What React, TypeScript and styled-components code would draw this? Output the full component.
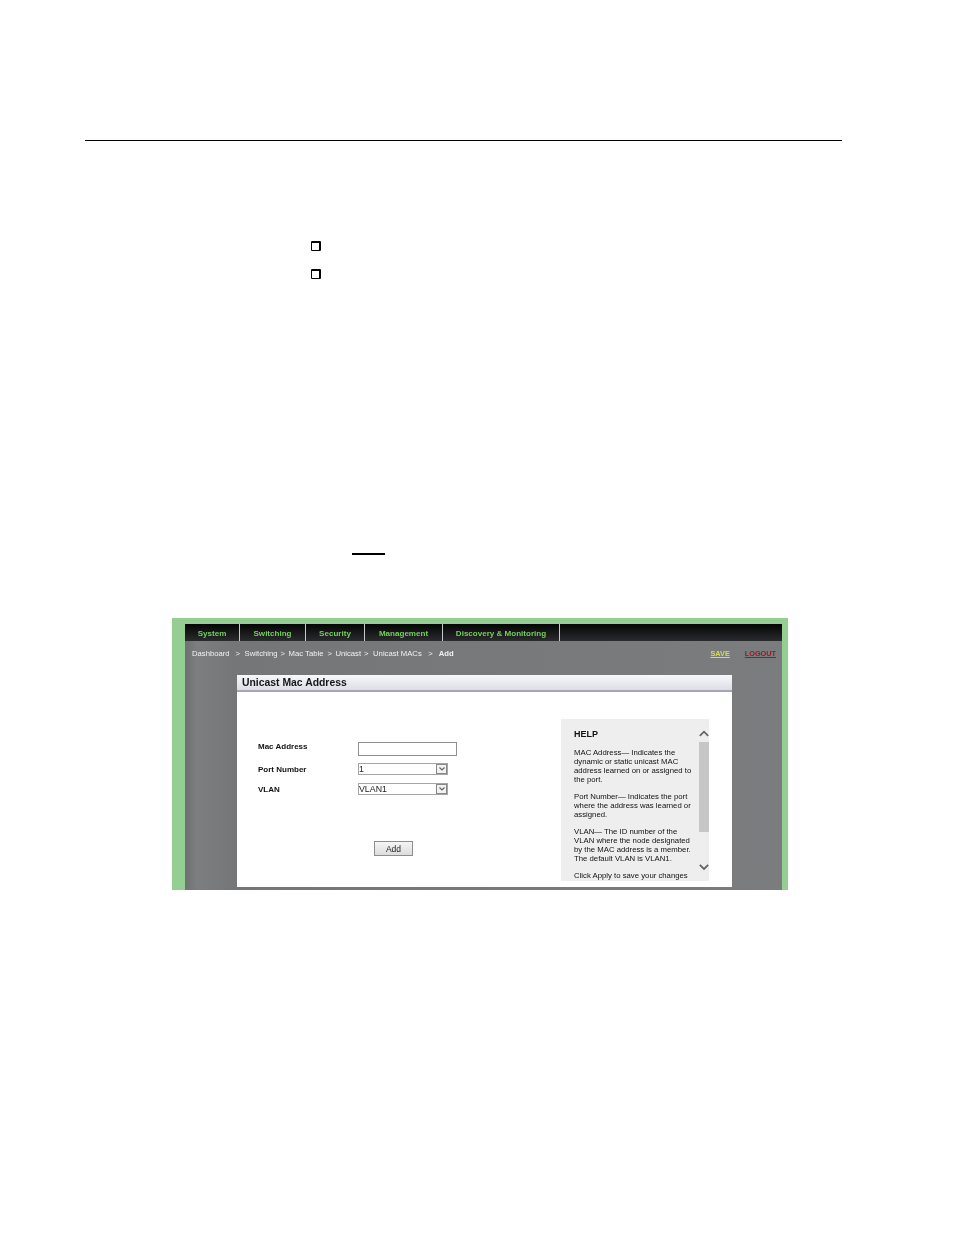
import React from "react";
import styled, { createGlobalStyle } from "styled-components";

const Global = createGlobalStyle`
  html, body { margin: 0; padding: 0; background: #fff; }
  body { font-family: "Liberation Sans", Arial, sans-serif; color: #000; }
`;

const Page = styled.div`
  width: 954px;
  height: 1235px;
  overflow: hidden;
  padding-top: 140px;
  box-sizing: border-box;
`;
const Rule = styled.div`
  margin-left: 85px;
  width: 757px;
  height: 1px;
  background: #000;
`;
const BoxList = styled.div`
  margin: 100px 0 0 311px;
  display: flex;
  flex-direction: column;
  gap: 18px;
`;
const Box = styled.span`
  display: block;
  width: 10px;
  height: 10px;
  box-sizing: border-box;
  border: 1px solid #000;
  border-top-width: 2px;
  border-right-width: 2.5px;
  border-radius: 1px;
`;
const Blank = styled.div`
  margin: 274px 0 0 352px;
  width: 33px;
  height: 2px;
  background: #000;
`;
const Shot = styled.div`
  margin: 63px 0 0 172px;
  width: 616px;
  height: 272px;
  box-sizing: border-box;
  padding: 6px 6px 0 13px;
  background: #94ce93;
  overflow: hidden;
  filter: blur(0.4px);
`;
const Console = styled.div`
  height: 272px;
  background: linear-gradient(90deg, #6f7071 0, #7d7e7f 2%, #757677 8%, #7b7c7d 100%);
`;
const Nav = styled.nav`
  display: flex;
  height: 17px;
  background: linear-gradient(180deg, #050505, #2a2b2d);
`;
const NavItem = styled.div<{ $w: number }>`
  width: ${(p) => p.$w}px;
  box-sizing: border-box;
  border-right: 1px solid #c8c8c8;
  font-size: 8.05px;
  line-height: 20px;
  font-weight: bold;
  color: #72d05c;
  text-align: center;
  white-space: nowrap;
`;
const Crumbs = styled.div`
  display: flex;
  align-items: center;
  height: 24px;
  padding: 0 6px 0 7px;
  font-size: 7.7px;
  color: #f2f2f2;
`;
const Crumb = styled.span<{ $gap: number; $bold?: boolean }>`
  margin-right: ${(p) => p.$gap}px;
  font-weight: ${(p) => (p.$bold ? "bold" : "normal")};
  white-space: nowrap;
`;
const Spacer = styled.span`
  flex: 1;
`;
const Action = styled.a<{ $color: string }>`
  color: ${(p) => p.$color};
  font-size: 7.3px;
  font-weight: bold;
  text-decoration: underline;
  margin-left: 15px;
`;
const Panel = styled.section`
  margin: 10px 0 0 52px;
  width: 495px;
  height: 212px;
  background: #fff;
`;
const PanelHead = styled.h2`
  margin: 0;
  height: 17px;
  box-sizing: border-box;
  padding-left: 5px;
  font-size: 10.4px;
  line-height: 15px;
  font-weight: bold;
  color: #15151c;
  background: linear-gradient(180deg, #f7f8fc, #dcdee6);
  border-bottom: 2px solid #a6a6b2;
`;
const PanelBody = styled.div`
  display: flex;
  justify-content: space-between;
  padding: 27px 23px 0 21px;
`;
const Form = styled.div`
  display: flex;
  flex-direction: column;
  padding-top: 23px;
`;
const Row = styled.div<{ $h: number }>`
  display: flex;
  align-items: center;
  height: ${(p) => p.$h}px;
`;
const Label = styled.label<{ $lift?: number }>`
  width: 100px;
  margin-bottom: ${(p) => p.$lift ?? 0}px;
  font-size: 8px;
  font-weight: bold;
  color: #111;
`;
const Input = styled.div`
  width: 99px;
  height: 14px;
  box-sizing: border-box;
  border: 1px solid #8f8f8f;
  background: #fff;
`;
const Select = styled.div`
  width: 90px;
  height: 12px;
  box-sizing: border-box;
  border: 1px solid #a5a5a5;
  display: flex;
  align-items: center;
  justify-content: space-between;
  font-size: 8.8px;
  color: #222;
`;
const Arrow = styled.span`
  width: 11px;
  height: 10px;
  box-sizing: border-box;
  border: 1px solid #888;
  background: #f2f2f2;
  display: flex;
  align-items: center;
  justify-content: center;
`;
const AddButton = styled.button`
  align-self: flex-start;
  margin: 45px 0 0 116px;
  width: 39px;
  height: 15px;
  padding: 0;
  box-sizing: border-box;
  border: 1px solid #8d8d8d;
  background: linear-gradient(180deg, #f5f5f5, #dcdcdc);
  font-family: inherit;
  font-size: 8.5px;
  color: #222;
`;
const Help = styled.aside`
  position: relative;
  width: 148px;
  height: 162px;
  box-sizing: border-box;
  padding: 10px 16px 0 13px;
  overflow: hidden;
  background: #eeeeee;
  font-size: 7.75px;
  line-height: 9px;
  color: #111;
`;
const HelpTitle = styled.h3`
  margin: 0 0 8px;
  font-size: 9px;
  line-height: 11px;
  font-weight: bold;
  color: #111;
`;
const HelpText = styled.p`
  margin: 0 0 8px;
`;
const ScrollTrack = styled.div`
  position: absolute;
  top: 11px;
  right: 0;
  width: 10px;
  height: 151px;
  display: flex;
  flex-direction: column;
  align-items: center;
`;
const ScrollThumb = styled.div`
  margin-top: 5px;
  width: 10px;
  height: 90px;
  background: #c6c6c6;
`;
const ScrollNext = styled.div`
  margin-top: 32px;
`;

const Chevron = ({ up, size = 10, w = 2.2 }: { up?: boolean; size?: number; w?: number }) => (
  <svg width={size} height={size * 0.67} viewBox="0 0 12 8" fill="none" stroke="#666" strokeWidth={w}>
    <path d={up ? "M1 7l5-5 5 5" : "M1 1l5 5 5-5"} />
  </svg>
);

const navItems: [string, number][] = [
  ["System", 55],
  ["Switching", 66],
  ["Security", 59],
  ["Management", 78],
  ["Discovery & Monitoring", 117],
];
const crumbs: [string, number, boolean?][] = [
  ["Dashboard", 6],
  [">", 4.5],
  ["Switching", 3],
  [">", 3.5],
  ["Mac Table", 4],
  [">", 3.5],
  ["Unicast", 3],
  [">", 4.5],
  ["Unicast MACs", 6.5],
  [">", 6],
  ["Add", 0, true],
];

export default function App() {
  return (
    <Page>
      <Global />
      <Rule />
      <BoxList>
        <Box />
        <Box />
      </BoxList>
      <Blank />
      <Shot>
        <Console>
          <Nav>
            {navItems.map(([t, w]) => (
              <NavItem key={t} $w={w}>{t}</NavItem>
            ))}
          </Nav>
          <Crumbs>
            {crumbs.map(([t, g, b], i) => (
              <Crumb key={i} $gap={g} $bold={b}>{t}</Crumb>
            ))}
            <Spacer />
            <Action $color="#d6dc55">SAVE</Action>
            <Action $color="#a01525">LOGOUT</Action>
          </Crumbs>
          <Panel>
            <PanelHead>Unicast Mac Address</PanelHead>
            <PanelBody>
              <Form>
                <Row $h={14}>
                  <Label $lift={6}>Mac Address</Label>
                  <Input />
                </Row>
                <Row $h={26}>
                  <Label>Port Number</Label>
                  <Select>1<Arrow><Chevron size={6} w={2.4} /></Arrow></Select>
                </Row>
                <Row $h={14}>
                  <Label>VLAN</Label>
                  <Select>VLAN1<Arrow><Chevron size={6} w={2.4} /></Arrow></Select>
                </Row>
                <AddButton>Add</AddButton>
              </Form>
              <Help>
                <HelpTitle>HELP</HelpTitle>
                <HelpText>MAC Address— Indicates the dynamic or static unicast MAC address learned on or assigned to the port.</HelpText>
                <HelpText>Port Number— Indicates the port where the address was learned or assigned.</HelpText>
                <HelpText>VLAN— The ID number of the VLAN where the node designated by the MAC address is a member. The default VLAN is VLAN1.</HelpText>
                <HelpText>Click Apply to save your changes to the running configuration file.</HelpText>
                <ScrollTrack>
                  <Chevron up />
                  <ScrollThumb />
                  <ScrollNext><Chevron /></ScrollNext>
                </ScrollTrack>
              </Help>
            </PanelBody>
          </Panel>
        </Console>
      </Shot>
    </Page>
  );
}
